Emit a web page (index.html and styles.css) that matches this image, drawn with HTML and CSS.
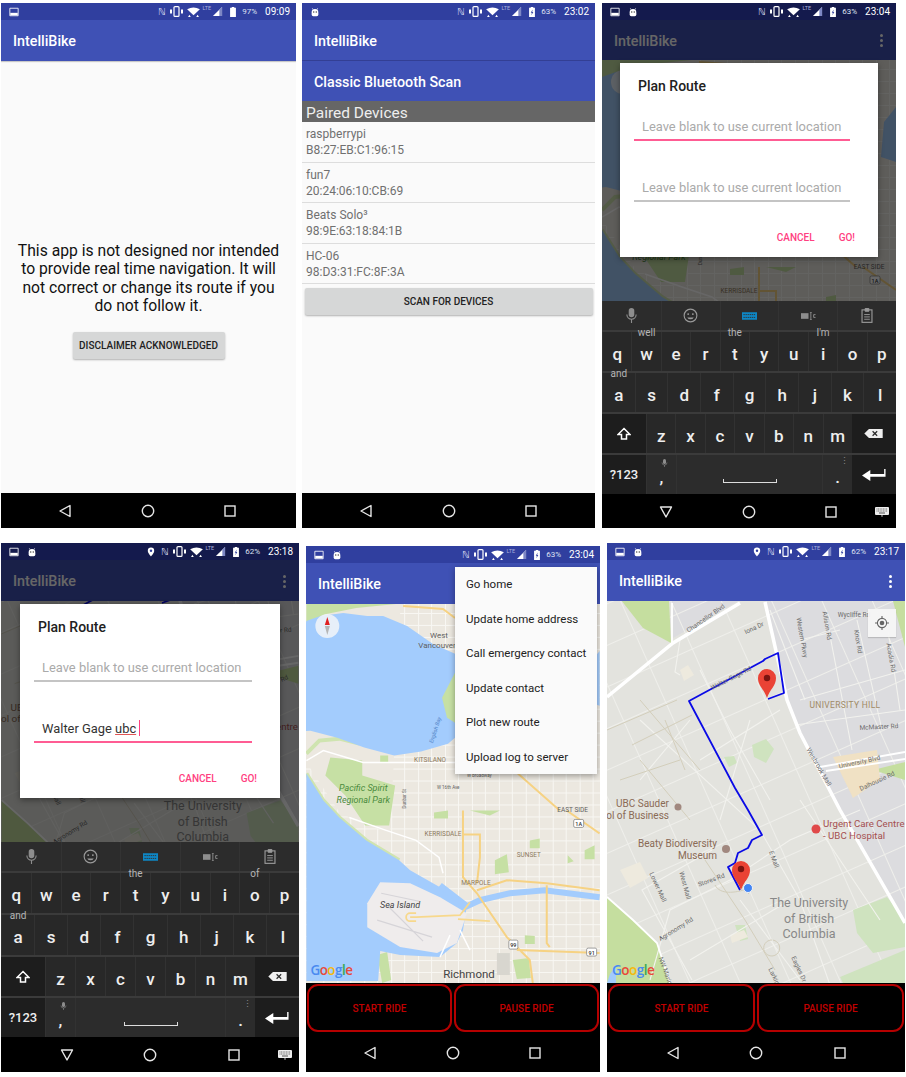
FILE: index.html
```html
<!DOCTYPE html>
<html lang="en">
<head>
  <meta charset="UTF-8" />
  <title>IntelliBike screens</title>
  <link rel="stylesheet" href="styles.css">
</head>
<body>
  <!-- shared icons and the two map drawings -->
  <svg class="defs" width="0" height="0">
    <defs>
      <symbol id="i-image" viewBox="0 0 12 12"><path d="M1 1.500h10v9H1z" fill="none" stroke="#fff" stroke-width="1"/><path d="M1.500 7h9v3h-9z" fill="#fff"/></symbol>
      <symbol id="i-droid" viewBox="0 0 12 12"><path d="M2 6.500a4 4 0 0 1 8 0V9a2 2 0 0 1-2 2H4a2 2 0 0 1-2-2z" fill="#fff"/><path d="M3.500 3 2.800 1.500M8.500 3l.7-1.500" stroke="#fff" stroke-width=".8"/><circle cx="4.500" cy="6" r=".8" fill="#333"/><circle cx="7.500" cy="6" r=".8" fill="#333"/></symbol>
      <symbol id="i-vibe" viewBox="0 0 13 11"><rect x="4" y=".6" width="5" height="9.800" rx="1" fill="none" stroke="#fff" stroke-width="1.200"/><path d="M0 3.500h2v4H0zM11 3.500h2v4h-2z" fill="#fff"/></symbol>
      <symbol id="i-wifi" viewBox="0 0 14 11"><path d="M0 2.500Q7-1.500 14 2.500L7 9z" fill="#fff"/><path d="M1 11l1.500-2.500L4 11zM10 11l1.500-2.500L13 11z" fill="#fff"/></symbol>
      <symbol id="i-signal" viewBox="0 0 12 12"><path d="M11 1v10H1z" fill="#fff"/><path d="M8 4v7h3V1z" fill="#7c86c4"/></symbol>
      <symbol id="i-batt" viewBox="0 0 8 12"><path d="M2.500 0h3v1H7.500v11h-7V1h2z" fill="#fff"/></symbol>
      <symbol id="i-charge" viewBox="0 0 8 12"><path d="M2.500 0h3v1H7.500v11h-7V1h2z" fill="#fff"/><path d="M4.800 3 2.500 7h1.400l-.7 3L5.600 6H4.200z" fill="#303f9f"/></symbol>
      <symbol id="i-place" viewBox="0 0 10 12"><path d="M5 .5a4 4 0 0 1 4 4c0 3-4 7-4 7s-4-4-4-7a4 4 0 0 1 4-4z" fill="#fff"/><circle cx="5" cy="4.500" r="1.500" fill="#303f9f"/></symbol>
      <symbol id="i-back" viewBox="0 0 14 14"><path d="M12 1.500v11L2 7z" fill="none" stroke="#e6e6e6" stroke-width="1.400" stroke-linejoin="round"/></symbol>
      <symbol id="i-down" viewBox="0 0 14 14"><path d="M1.500 2h11L7 12z" fill="none" stroke="#e6e6e6" stroke-width="1.400" stroke-linejoin="round"/></symbol>
      <symbol id="i-home" viewBox="0 0 14 14"><circle cx="7" cy="7" r="5.700" fill="none" stroke="#e6e6e6" stroke-width="1.400"/></symbol>
      <symbol id="i-recent" viewBox="0 0 14 14"><rect x="2" y="2" width="10" height="10" fill="none" stroke="#e6e6e6" stroke-width="1.400"/></symbol>
      <symbol id="i-kbd" viewBox="0 0 14 10"><rect width="14" height="8" rx="1" fill="#eee"/><path d="M1.500 2h11M1.500 4h11" stroke="#555" stroke-width=".9" stroke-dasharray="1 .6"/><path d="M4 6h6" stroke="#555"/><path d="M6 8.500h2l-1 1.500z" fill="#eee"/></symbol>
      <symbol id="i-mic" viewBox="0 0 14 16"><rect x="4" y="0" width="6" height="10" rx="3" fill="#8d8d8d"/><path d="M2 7a5 5 0 0 0 10 0M7 12v4" fill="none" stroke="#8d8d8d" stroke-width="1.200"/></symbol>
      <symbol id="i-smile" viewBox="0 0 16 16"><circle cx="8" cy="8" r="6.800" fill="none" stroke="#9a9a9a" stroke-width="1.200"/><circle cx="5.500" cy="6.500" r="1" fill="#9a9a9a"/><circle cx="10.500" cy="6.500" r="1" fill="#9a9a9a"/><path d="M4.500 10a4 4 0 0 0 7 0z" fill="#9a9a9a"/></symbol>
      <symbol id="i-keys" viewBox="0 0 16 8"><rect width="16" height="8" fill="#0e86c4"/><path d="M1.500 2.500h13M1.500 5.500h13" stroke="#333" stroke-width="1" stroke-dasharray="1.500 .7"/></symbol>
      <symbol id="i-abc" viewBox="0 0 16 8"><rect y="1" width="8" height="6" fill="#8d8d8d"/><path d="M9.500 0h2M9.500 8h2M10.500 0v8" stroke="#8d8d8d" fill="none"/><path d="M15.500 2.500h-2v3h2" stroke="#8d8d8d" fill="none"/></symbol>
      <symbol id="i-clip" viewBox="0 0 12 16"><rect x=".7" y="2" width="10.600" height="13.300" fill="none" stroke="#9a9a9a" stroke-width="1.200"/><path d="M4 .5h4v3H4zM3 7h6M3 9.500h6M3 12h6" stroke="#9a9a9a" fill="#9a9a9a"/></symbol>
      <symbol id="i-shift" viewBox="0 0 14 14"><path d="M7 1.500 13 7.500H9.500v4.500h-5V7.500H1z" fill="none" stroke="#fff" stroke-width="1.500"/></symbol>
      <symbol id="i-del" viewBox="0 0 20 12"><path d="M5 1h15v10H5L0 6z" fill="#eee"/><path d="M9 3.500l5 5M14 3.500l-5 5" stroke="#2a2a2a" stroke-width="1.300"/></symbol>
      <symbol id="i-enter" viewBox="0 0 26 14"><path d="M0 8l9-6v4.500h15V1h1.500v8.500H9V14z" fill="#fff"/></symbol>

      <pattern id="streets" width="27" height="24" patternUnits="userSpaceOnUse">
        <path d="M0 .5h27M13.500 0v24M26.500 0v24M0 12.500h27" stroke="#f8f7f3" stroke-width="1" fill="none"/>
      </pattern>
      <pattern id="campus" width="46" height="38" patternUnits="userSpaceOnUse" patternTransform="rotate(-24)">
        <path d="M0 .5h46M.5 0v38" stroke="#efefeb" stroke-width="1" fill="none"/>
      </pattern>
      <g id="logo">
        <text class="glogo"><tspan fill="#4a8af0">G</tspan><tspan fill="#e8493a">o</tspan><tspan fill="#f5b90f">o</tspan><tspan fill="#4a8af0">g</tspan><tspan fill="#36a853">l</tspan><tspan fill="#e8493a">e</tspan></text>
      </g>

      <g id="map-city">
        <rect x="300" y="540" width="310" height="450" fill="#ece8e0"/>
        <rect x="300" y="540" width="310" height="450" fill="url(#streets)"/>
        <path d="M300 603h100v30l-10 200-50-20-40-60z" fill="#ece8e0"/>
        <path class="green" d="M306 603h90l-40 4-30 6-20 8z"/>
        <path class="green" d="M330 757l32 3v15l33 10-6 40h-24l-20-30-20-20z"/>
        <path class="strip" d="M306 773l17 27 16 17 27 23 33 20M306 753l13-13 20-2 20 5"/>
        <path class="green" d="M380 755h8v7h-8zM430 660l25-6v70l-12-4-8-24zM470 810l20 5 10-5zM495 860l12-6 2 18-14 2z"/>
        <path class="green" d="M377 955l10-3 4 28-9 3zM513 960l16-2 2 20-14 1zM525 935l10 1v8h-10z"/>
        <path class="green" d="M434 812l14-2v8h-14zM530 840l10-2v10h-10zM568 855l6 6-6 2zM585 850l10-5v14h-10z"/>
        <path class="water" d="M306 620l14-5 23-3 24 3 16 0 24 10 26 18 22 10v19l-13 25 5 20 8 5v15l-7 6-27 8-27 4-30-8-27-10-27-7-20 2-13 13z"/>
        <path class="water" d="M600 650l-12 15-3 35 15 5z"/>
        <path class="water" d="M306 773l17 27 16 17 27 23 33 20 11 10 30 17 27 18-4 25-6 13-17 14-40-2-20-4-2 30h-72z"/>
        <path class="river" d="M440 885l27 21 13-6 30-7 35-3 55 7"/>
        <path class="isle" d="M367 903l13-21 30 1 30 14 27 16-10 30-20 10-37-6-33-20z"/>
        <path class="bright" d="M306 760l17-10 40 12h93M349 817l37 13 30 10 23 17 4 16M450 935l-10 22M460 930l10 20"/>
        <path class="runway" d="M381 893l38 8M377 920l55 17M387 905l36 36"/>
        <path class="isle-road" d="M410 917h6l44-2 10-13M416 913h-6a4 4 0 0 0 0 8h6M458 919l32 2"/>
        <path class="hwy" d="M403 605l40 3 12 9M463 810v67l14 16 30 44 23 23 3 23M463 834h17v23l-3 26M477 890l30-10 40 3 53 7M547 885v58l3 4M517 950l83 3M518 773l42 37M567 810l33 23"/>
        <rect class="field" x="497" y="953" width="13" height="12"/>
        <text class="lbl" x="439" y="637" text-anchor="middle" font-size="8">West</text>
        <text class="lbl" x="437" y="647" text-anchor="middle" font-size="8">Vancouver</text>
        <text class="lbl tan" x="430" y="761" text-anchor="middle" font-size="6.500">KITSILANO</text>
        <text class="park" x="363" y="791" text-anchor="middle">Pacific Spirit</text>
        <text class="park" x="363" y="803" text-anchor="middle">Regional Park</text>
        <text class="bay" transform="rotate(-72 437 730)" x="437" y="730" text-anchor="middle">English Bay</text>
        <text class="lbl" transform="rotate(-90 406 808)" x="406" y="808" font-size="4.500">Dunbar St</text>
        <text class="lbl" x="437" y="788" font-size="4.500">W 16th Ave</text>
        <text class="lbl" x="467" y="776" font-size="4.500">W Broadway</text>
        <text class="lbl" x="573" y="812" text-anchor="middle" font-size="6.500">EAST SIDE</text>
        <text class="lbl tan" x="443" y="836" text-anchor="middle" font-size="6.500">KERRISDALE</text>
        <text class="lbl tan" x="529" y="857" text-anchor="middle" font-size="6.500">SUNSET</text>
        <text class="lbl tan" x="476" y="885" text-anchor="middle" font-size="6.500">MARPOLE</text>
        <text class="isle-name" x="400" y="908" text-anchor="middle">Sea Island</text>
        <text class="big" x="469" y="978" text-anchor="middle">Richmond</text>
        <rect class="shield" x="509" y="940" width="9" height="9" rx="1.500"/>
        <text class="sh" x="513.500" y="947" text-anchor="middle">99</text>
        <rect class="shield" x="587" y="948" width="10" height="8" rx="1.500"/>
        <text class="sh" x="592" y="954.500" text-anchor="middle">91</text>
        <rect class="shield" x="574" y="819" width="10" height="8" rx="1.500"/>
        <text class="sh" x="579" y="825.500" text-anchor="middle">1A</text>
        <use href="#logo" x="310" y="975"/>
        <circle cx="327" cy="625" r="12" fill="#eef3f8" fill-opacity=".9"/>
        <path d="M327 616l-2.500 8h5z" fill="#e02020"/>
        <path d="M324.500 625h5l-2.500 9z" fill="#b5b5b5"/>
      </g>

      <g id="map-ubc">
        <rect x="600" y="540" width="310" height="450" fill="#e3e3de"/>
        <path d="M671 600h69l-67 38zM765 600h145v330L840 810l-40-77-13-33z" fill="#dcdcdf"/>
        <rect x="600" y="600" width="310" height="390" fill="url(#campus)"/>
        <path class="ugreen" d="M621 600h48l2 43-28-15z"/>
        <path class="ugreen" d="M893 601h12v46z"/>
        <path class="ugreen" d="M607 897l26 23 24 23 13 40h-63z"/>
        <path class="ugreen" d="M873 770l32-8v18z"/>
        <path class="lgreen" d="M853 910l34-13 18 23v27l-32 6-16-20zM840 977l65-27v33h-62zM735 925l10 0 3 14-8 2zM752 745l14-6 8 10-8 14-12-6zM724 757l10-1 3 7-8 4z"/>
        <path d="M833 757l44-7 3 30-27 18z" fill="#f0e1c4"/>
        <path d="M610 974l6-8v17h-9z" fill="#a2cbfc"/>
        <path d="M680 670l8-5 6 10-10 6zM730 935l14-5 4 7-16 6zM620 870l20-8 8 16-18 10z" fill="#eeeade"/>
        <path class="minor" d="M680 640l-5 32 5 3M700 670l30 60 40 70M640 720l120 110 40 70 30 85M690 720l-50 60M700 760l80-50M750 720l-30 100M770 610l35 90M800 640l40-10M827 620l25 130M857 620l25 110M885 610l15 100M800 700l105-30M795 725l110-15M650 980l20-70 60-30 60-40 70-30M740 900l60 80M800 800l80 120M690 960l100-60M712 850l-70 40 50 90"/>
        <path class="path-tan" d="M607 730l70-30M640 700l60 70M665 720l20 50M632 745l60-30M640 760l50 60M620 780l60-20M705 860l40 60 30 50M735 880l14 14M772 940a8 8 0 1 0 1 .1M715 885c5 10 20 8 32 4"/>
        <path class="wide" d="M607 697l66-54 67-40"/>
        <path class="wide" d="M765 602l22 98 13 33 40 77 65 113"/>
        <path class="mid" d="M820 767l85-15M826 771l79-12M672 603v40M607 897l26 23 24 23 13 40"/>
        <path class="route" d="M768 699l16-6-6-40-13 6-2 2-74 40 46 87 13 22 14 25-10 5-4 8-10 5-3 10-7 4 12 23"/>
        <g class="road-lbl">
          <text transform="rotate(-35 707 620)" x="707" y="620" text-anchor="middle">Chancellor Blvd</text>
          <text transform="rotate(-25 755 630)" x="755" y="630" text-anchor="middle">Iona Dr</text>
          <text transform="rotate(-27 732 680)" x="732" y="680" text-anchor="middle">Walter Gage Rd</text>
          <text transform="rotate(80 800 638)" x="800" y="638" text-anchor="middle">Western Pkwy</text>
          <text transform="rotate(80 825 626)" x="825" y="626" text-anchor="middle">Allison Rd</text>
          <text x="854" y="617" text-anchor="middle">Wycliffe Rd</text>
          <text transform="rotate(80 856 642)" x="856" y="642" text-anchor="middle">Knox Rd</text>
          <text transform="rotate(80 889 658)" x="889" y="658" text-anchor="middle">Acadia Rd</text>
          <text transform="rotate(-3 879 729)" x="879" y="729" text-anchor="middle">McMaster Rd</text>
          <text transform="rotate(60 817 768)" x="817" y="768" text-anchor="middle">Wesbrook Mall</text>
          <text transform="rotate(-12 860 764)" x="860" y="764" text-anchor="middle">University Blvd</text>
          <text transform="rotate(-25 878 783)" x="878" y="783" text-anchor="middle">Dalhousie Rd</text>
          <text transform="rotate(70 772 860)" x="772" y="860" text-anchor="middle">E Mall</text>
          <text transform="rotate(-20 712 882)" x="712" y="882" text-anchor="middle">Stores Rd</text>
          <text transform="rotate(65 656 888)" x="656" y="888" text-anchor="middle">Lower Mall</text>
          <text transform="rotate(75 683 886)" x="683" y="886" text-anchor="middle">West Mall</text>
          <text transform="rotate(-32 677 931)" x="677" y="931" text-anchor="middle">Agronomy Rd</text>
          <text transform="rotate(70 664 973)" x="664" y="973" text-anchor="middle">NW Marine</text>
          <text transform="rotate(65 772 977)" x="772" y="977" text-anchor="middle">Larkin</text>
          <text transform="rotate(65 797 970)" x="797" y="970" text-anchor="middle">Eagles Dr</text>
        </g>
        <text class="hood" x="845" y="708" text-anchor="middle">UNIVERSITY HILL</text>
        <text class="poi" x="616" y="807">UBC Sauder</text>
        <circle cx="678" cy="807" r="3.500" fill="#a1887f"/>
        <text class="poi" x="669" y="819" text-anchor="end">School of Business</text>
        <text class="poi" x="717" y="847" text-anchor="end">Beaty Biodiversity</text>
        <text class="poi" x="717" y="859" text-anchor="end">Museum</text>
        <circle cx="726" cy="849" r="4" fill="#a1887f"/>
        <circle cx="816" cy="829" r="4.500" fill="#e04a4a"/>
        <text class="hosp" x="823" y="827">Urgent Care Centre</text>
        <text class="hosp" x="823" y="839">- UBC Hospital</text>
        <text class="campus-name" x="809" y="907" text-anchor="middle">The University</text>
        <text class="campus-name" x="809" y="923" text-anchor="middle">of British</text>
        <text class="campus-name" x="809" y="938" text-anchor="middle">Columbia</text>
        <path class="pin" d="M767 698c-3-9-9-12-9-20a9 9 0 0 1 18 0c0 8-6 11-9 20z"/>
        <circle cx="767" cy="678" r="3.200" fill="#7a1410"/>
        <circle cx="748" cy="888" r="4.500" fill="#4285f4" stroke="#f4f4f4"/>
        <path class="pin" d="M741 890c-3-9-9-12-9-20a9 9 0 0 1 18 0c0 8-6 11-9 20z"/>
        <circle cx="741" cy="869" r="3.200" fill="#7a1410"/>
        <use href="#logo" x="612" y="975"/>
      </g>
    </defs>
  </svg>

  <div class="board">
    <div class="row">
      <!-- disclaimer -->
      <section class="screen s1">
        <div class="status">
          <svg class="ic"><use href="#i-image"/></svg>
          <span class="nfc first">ℕ</span>
          <svg class="ic vibe"><use href="#i-vibe"/></svg>
          <svg class="ic wifi"><use href="#i-wifi"/></svg>
          <span class="lte">LTE</span>
          <svg class="ic sig"><use href="#i-signal"/></svg>
          <svg class="ic batt"><use href="#i-batt"/></svg>
          <span class="pct">97%</span>
          <span class="time">09:09</span>
        </div>
        <header class="appbar"><span class="app-title">IntelliBike</span></header>
        <main class="notice">
          <p class="notice-text">This app is not designed nor intended to provide real time navigation. It will not correct or change its route if you do not follow it.</p>
          <button class="flat-btn ack">DISCLAIMER ACKNOWLEDGED</button>
        </main>
        <nav class="navbar">
          <span class="nav-cell"><svg class="nav-ic"><use href="#i-back"/></svg></span>
          <span class="nav-cell"><svg class="nav-ic"><use href="#i-home"/></svg></span>
          <span class="nav-cell"><svg class="nav-ic"><use href="#i-recent"/></svg></span>
        </nav>
      </section>

      <!-- bluetooth -->
      <section class="screen s2">
        <div class="status">
          <svg class="ic"><use href="#i-droid"/></svg>
          <span class="nfc first">ℕ</span>
          <svg class="ic vibe"><use href="#i-vibe"/></svg>
          <svg class="ic wifi"><use href="#i-wifi"/></svg>
          <span class="lte">LTE</span>
          <svg class="ic sig"><use href="#i-signal"/></svg>
          <svg class="ic batt"><use href="#i-charge"/></svg>
          <span class="pct">63%</span>
          <span class="time">23:02</span>
        </div>
        <header class="appbar split"><span class="app-title">IntelliBike</span></header>
        <div class="appbar sub"><span class="app-title">Classic Bluetooth Scan</span></div>
        <div class="paired">Paired Devices</div>
        <main class="devices">
          <div class="device">raspberrypi<br>B8:27:EB:C1:96:15</div>
          <div class="device">fun7<br>20:24:06:10:CB:69</div>
          <div class="device">Beats Solo³<br>98:9E:63:18:84:1B</div>
          <div class="device">HC-06<br>98:D3:31:FC:8F:3A</div>
          <button class="flat-btn scan">SCAN FOR DEVICES</button>
        </main>
        <nav class="navbar">
          <span class="nav-cell"><svg class="nav-ic"><use href="#i-back"/></svg></span>
          <span class="nav-cell"><svg class="nav-ic"><use href="#i-home"/></svg></span>
          <span class="nav-cell"><svg class="nav-ic"><use href="#i-recent"/></svg></span>
        </nav>
      </section>

      <!-- plan route, start field focused -->
      <section class="screen s3">
        <div class="status dim">
          <svg class="ic"><use href="#i-image"/></svg>
          <svg class="ic lead"><use href="#i-droid"/></svg>
          <span class="nfc first">ℕ</span>
          <svg class="ic vibe"><use href="#i-vibe"/></svg>
          <svg class="ic wifi"><use href="#i-wifi"/></svg>
          <span class="lte">LTE</span>
          <svg class="ic sig"><use href="#i-signal"/></svg>
          <svg class="ic batt"><use href="#i-charge"/></svg>
          <span class="pct">63%</span>
          <span class="time">23:04</span>
        </div>
        <div class="backdrop">
          <header class="appbar"><span class="app-title">IntelliBike</span><span class="dots"><i></i><i></i><i></i></span></header>
          <svg class="map" viewBox="306 603 294 241"><use href="#map-city"/></svg>
          <div class="scrim"></div>
          <div class="dialog">
            <h2 class="dialog-title">Plan Route</h2>
            <div class="field focus"><span class="hint-text">Leave blank to use current location</span></div>
            <div class="field"><span class="hint-text">Leave blank to use current location</span></div>
            <div class="dialog-actions"><span>CANCEL</span><span>GO!</span></div>
          </div>
        </div>
        <div class="keyboard">
          <div class="kb-tools">
            <span><svg class="t-mic"><use href="#i-mic"/></svg></span>
            <span><svg class="t-smile"><use href="#i-smile"/></svg></span>
            <span><svg class="t-keys"><use href="#i-keys"/></svg></span>
            <span><svg class="t-keys"><use href="#i-abc"/></svg></span>
            <span><svg class="t-clip"><use href="#i-clip"/></svg></span>
          </div>
          <div class="kb-row">
            <span class="key">q</span><span class="key">w<em>well</em></span><span class="key">e</span><span class="key">r</span><span class="key">t<em>the</em></span><span class="key">y</span><span class="key">u</span><span class="key">i<em>I'm</em></span><span class="key">o</span><span class="key">p</span>
          </div>
          <div class="kb-row">
            <span class="key">a<em>and</em></span><span class="key">s</span><span class="key">d</span><span class="key">f</span><span class="key">g</span><span class="key">h</span><span class="key">j</span><span class="key">k</span><span class="key">l</span>
          </div>
          <div class="kb-row">
            <span class="key fn"><svg class="k-shift"><use href="#i-shift"/></svg></span>
            <span class="key">z</span><span class="key">x</span><span class="key">c</span><span class="key">v</span><span class="key">b</span><span class="key">n</span><span class="key">m</span>
            <span class="key fn"><svg class="k-del"><use href="#i-del"/></svg></span>
          </div>
          <div class="kb-row">
            <span class="key fn sym">?123</span>
            <span class="key side">,<svg class="k-mini"><use href="#i-mic"/></svg></span>
            <span class="key space"><i class="space-bar"></i></span>
            <span class="key side">.<b class="more">⋮</b></span>
            <span class="key fn"><svg class="k-enter"><use href="#i-enter"/></svg></span>
          </div>
        </div>
        <nav class="navbar">
          <span class="nav-cell"><svg class="nav-ic"><use href="#i-down"/></svg></span>
          <span class="nav-cell"><svg class="nav-ic"><use href="#i-home"/></svg></span>
          <span class="nav-cell"><svg class="nav-ic"><use href="#i-recent"/></svg></span>
          <svg class="nav-kbd"><use href="#i-kbd"/></svg>
        </nav>
      </section>
    </div>

    <div class="row">
      <!-- plan route, destination typed -->
      <section class="screen s4">
        <div class="status dim">
          <svg class="ic"><use href="#i-image"/></svg>
          <svg class="ic lead"><use href="#i-droid"/></svg>
          <svg class="ic place first"><use href="#i-place"/></svg>
          <span class="nfc after-place">ℕ</span>
          <svg class="ic vibe"><use href="#i-vibe"/></svg>
          <svg class="ic wifi"><use href="#i-wifi"/></svg>
          <span class="lte">LTE</span>
          <svg class="ic sig"><use href="#i-signal"/></svg>
          <svg class="ic batt"><use href="#i-charge"/></svg>
          <span class="pct">62%</span>
          <span class="time">23:18</span>
        </div>
        <div class="backdrop">
          <header class="appbar"><span class="app-title">IntelliBike</span><span class="dots"><i></i><i></i><i></i></span></header>
          <svg class="map" viewBox="607 697 298 242"><use href="#map-ubc"/></svg>
          <div class="scrim"></div>
          <div class="dialog">
            <h2 class="dialog-title">Plan Route</h2>
            <div class="field"><span class="hint-text">Leave blank to use current location</span></div>
            <div class="field focus"><span class="typed">Walter Gage <u>ubc</u></span><i class="caret"></i></div>
            <div class="dialog-actions"><span>CANCEL</span><span>GO!</span></div>
          </div>
        </div>
        <div class="keyboard">
          <div class="kb-tools">
            <span><svg class="t-mic"><use href="#i-mic"/></svg></span>
            <span><svg class="t-smile"><use href="#i-smile"/></svg></span>
            <span><svg class="t-keys"><use href="#i-keys"/></svg></span>
            <span><svg class="t-keys"><use href="#i-abc"/></svg></span>
            <span><svg class="t-clip"><use href="#i-clip"/></svg></span>
          </div>
          <div class="kb-row tall">
            <span class="key">q</span><span class="key">w</span><span class="key">e</span><span class="key">r</span><span class="key">t<em>the</em></span><span class="key">y</span><span class="key">u</span><span class="key">i</span><span class="key">o<em>of</em></span><span class="key">p</span>
          </div>
          <div class="kb-row tall">
            <span class="key">a<em>and</em></span><span class="key">s</span><span class="key">d</span><span class="key">f</span><span class="key">g</span><span class="key">h</span><span class="key">j</span><span class="key">k</span><span class="key">l</span>
          </div>
          <div class="kb-row">
            <span class="key fn"><svg class="k-shift"><use href="#i-shift"/></svg></span>
            <span class="key">z</span><span class="key">x</span><span class="key">c</span><span class="key">v</span><span class="key">b</span><span class="key">n</span><span class="key">m</span>
            <span class="key fn"><svg class="k-del"><use href="#i-del"/></svg></span>
          </div>
          <div class="kb-row">
            <span class="key fn sym">?123</span>
            <span class="key side">,<svg class="k-mini"><use href="#i-mic"/></svg></span>
            <span class="key space"><i class="space-bar"></i></span>
            <span class="key side">.<b class="more">⋮</b></span>
            <span class="key fn"><svg class="k-enter"><use href="#i-enter"/></svg></span>
          </div>
        </div>
        <nav class="navbar">
          <span class="nav-cell"><svg class="nav-ic"><use href="#i-down"/></svg></span>
          <span class="nav-cell"><svg class="nav-ic"><use href="#i-home"/></svg></span>
          <span class="nav-cell"><svg class="nav-ic"><use href="#i-recent"/></svg></span>
          <svg class="nav-kbd"><use href="#i-kbd"/></svg>
        </nav>
      </section>

      <!-- overflow menu over the city map -->
      <section class="screen s5">
        <div class="status">
          <svg class="ic"><use href="#i-image"/></svg>
          <svg class="ic lead"><use href="#i-droid"/></svg>
          <span class="nfc first">ℕ</span>
          <svg class="ic vibe"><use href="#i-vibe"/></svg>
          <svg class="ic wifi"><use href="#i-wifi"/></svg>
          <span class="lte">LTE</span>
          <svg class="ic sig"><use href="#i-signal"/></svg>
          <svg class="ic batt"><use href="#i-charge"/></svg>
          <span class="pct">63%</span>
          <span class="time">23:04</span>
        </div>
        <header class="appbar"><span class="app-title">IntelliBike</span></header>
        <svg class="map" viewBox="306 603 294 380"><use href="#map-city"/></svg>
        <div class="ride-bar"><button class="ride-btn">START RIDE</button><button class="ride-btn">PAUSE RIDE</button></div>
        <nav class="navbar low">
          <span class="nav-cell"><svg class="nav-ic"><use href="#i-back"/></svg></span>
          <span class="nav-cell"><svg class="nav-ic"><use href="#i-home"/></svg></span>
          <span class="nav-cell"><svg class="nav-ic"><use href="#i-recent"/></svg></span>
        </nav>
        <ul class="menu">
          <li>Go home</li>
          <li>Update home address</li>
          <li>Call emergency contact</li>
          <li>Update contact</li>
          <li>Plot new route</li>
          <li>Upload log to server</li>
        </ul>
      </section>

      <!-- route on the campus map -->
      <section class="screen s6">
        <div class="status">
          <svg class="ic"><use href="#i-image"/></svg>
          <svg class="ic lead"><use href="#i-droid"/></svg>
          <svg class="ic place first"><use href="#i-place"/></svg>
          <span class="nfc after-place">ℕ</span>
          <svg class="ic vibe"><use href="#i-vibe"/></svg>
          <svg class="ic wifi"><use href="#i-wifi"/></svg>
          <span class="lte">LTE</span>
          <svg class="ic sig"><use href="#i-signal"/></svg>
          <svg class="ic batt"><use href="#i-charge"/></svg>
          <span class="pct">62%</span>
          <span class="time">23:17</span>
        </div>
        <header class="appbar"><span class="app-title">IntelliBike</span><span class="dots"><i></i><i></i><i></i></span></header>
        <svg class="map" viewBox="607 601 298 382"><use href="#map-ubc"/></svg>
        <div class="ride-bar"><button class="ride-btn">START RIDE</button><button class="ride-btn">PAUSE RIDE</button></div>
        <nav class="navbar low">
          <span class="nav-cell"><svg class="nav-ic"><use href="#i-back"/></svg></span>
          <span class="nav-cell"><svg class="nav-ic"><use href="#i-home"/></svg></span>
          <span class="nav-cell"><svg class="nav-ic"><use href="#i-recent"/></svg></span>
        </nav>
        <div class="locate">
          <svg viewBox="0 0 14 14" width="14" height="14"><circle cx="7" cy="7" r="4.600" fill="none" stroke="#666" stroke-width="1.100"/><circle cx="7" cy="7" r="2.300" fill="#666"/><path d="M7 0v2.400M7 11.600V14M0 7h2.400M11.600 7H14" stroke="#666" stroke-width="1.100"/></svg>
        </div>
      </section>
    </div>
  </div>
</body>
</html>
```

FILE: styles.css
```css
body {
  margin: 0;
  background: #fff;
  font-family: Roboto, 'Liberation Sans', sans-serif;
  color: #222;
}

.defs {
  position: absolute;
}

.board {
  display: flex;
  flex-direction: column;
  gap: 15px;
  padding-top: 3px;
}

.row {
  display: flex;
  align-items: flex-start;
}

.screen {
  position: relative;
  display: flex;
  flex-direction: column;
  overflow: hidden;
  background: #fafafa;
}

.s1 { width: 295px; height: 525px; margin-left: 1px; }
.s2 { width: 293px; height: 525px; margin-left: 6px; }
.s3 { width: 294px; height: 525px; margin-left: 7px; }
.s4 { width: 298px; height: 529px; margin-left: 1px; }
.s5 { width: 294px; height: 526px; margin-left: 7px; margin-top: 3px; }
.s6 { width: 298px; height: 529px; margin-left: 7px; }

/* status bar */
.status {
  display: flex;
  align-items: center;
  flex: none;
  height: 17px;
  padding: 0 6px 0 8px;
  background: #303f9f;
  color: #fff;
}

.status.dim {
  background: #141a4d;
}

.ic {
  width: 10px;
  height: 10px;
  flex: none;
}

.lead {
  margin-left: 8px;
}

.vibe {
  width: 13px;
  height: 11px;
  margin-left: 4px;
}

.wifi {
  width: 13px;
  height: 10px;
  margin-left: 4px;
}

.sig {
  width: 11px;
  height: 11px;
  margin-left: 1px;
}

.batt {
  width: 8px;
  height: 10px;
  margin-left: 6px;
}

.place {
  width: 8px;
}

.first {
  margin-left: auto;
}

.after-place {
  margin-left: 6px;
}

.nfc {
  font: 9.500px 'DejaVu Sans', sans-serif;
  color: #d8dcf0;
}

.lte {
  align-self: flex-start;
  margin: 2px 0 0 3px;
  font-size: 5.500px;
  color: #aab0dc;
}

.pct {
  margin-left: 5px;
  font-size: 8px;
  color: #dfe2f2;
}

.time {
  margin-left: 8px;
  font-size: 10px;
}

/* app bar */
.appbar {
  display: flex;
  align-items: center;
  justify-content: space-between;
  flex: none;
  height: 41px;
  padding: 1px 12px 0;
  box-sizing: border-box;
  background: #3f51b5;
  color: #fff;
  box-shadow: 0 1px 1px rgba(0, 0, 0, .2);
}

.app-title {
  font-size: 14.300px;
  font-weight: 500;
}

.appbar.split {
  border-bottom: 1px solid #333f94;
}

.appbar.sub {
  height: 40px;
  box-shadow: none;
}

.dots {
  display: flex;
  flex-direction: column;
  gap: 2px;
  margin-right: 1px;
}

.dots i {
  width: 3px;
  height: 3px;
  border-radius: 50%;
  background: #fff;
}

/* disclaimer */
.notice {
  flex: 1;
  display: flex;
  flex-direction: column;
  align-items: center;
  padding: 181px 14px 0;
}

.notice-text {
  margin: 0;
  font-size: 15.700px;
  line-height: 18.300px;
  text-align: center;
  color: #111;
}

.flat-btn {
  border: 0;
  border-radius: 2px;
  background: #d6d7d7;
  box-shadow: 0 1px 2px rgba(0, 0, 0, .3);
  font-family: Roboto, sans-serif;
  font-size: 10px;
  font-weight: 500;
  color: #222;
}

.ack {
  width: 152px;
  height: 27px;
  margin-top: 17px;
  padding: 0;
}

/* bluetooth list */
.paired {
  flex: none;
  height: 21px;
  padding-left: 4px;
  background: #666;
  color: #eee;
  font-size: 15.500px;
  line-height: 24px;
}

.devices {
  flex: 1;
  display: flex;
  flex-direction: column;
}

.device {
  height: 40.500px;
  box-sizing: border-box;
  padding: 4px 4px 0;
  border-bottom: 1px solid #ddd;
  font-size: 12px;
  line-height: 16px;
  color: #707070;
}

.scan {
  align-self: center;
  width: 288px;
  height: 27px;
  margin-top: 4px;
}

/* nav bar */
.navbar {
  display: flex;
  align-items: center;
  flex: none;
  height: 35px;
  padding-left: 23px;
  background: #000;
}

.navbar.low {
  height: 39px;
}

.nav-cell {
  display: flex;
  justify-content: center;
  width: 82.500px;
}

.s4 .navbar, .s6 .navbar {
  padding-left: 24px;
}

.s4 .nav-cell, .s6 .nav-cell {
  width: 83.500px;
}

.nav-ic {
  width: 14px;
  height: 14px;
}

.nav-kbd {
  width: 14px;
  height: 10px;
  margin-left: auto;
  margin-right: 7px;
}

/* map */
.map {
  display: block;
  flex: 1;
  min-height: 0;
  width: 100%;
}

.s3 .map, .s4 .map {
  height: 241px;
  flex: none;
}

.water { fill: #a3ccfd; }
.green { fill: #c6e0a4; }
.strip { fill: none; stroke: #cfe4b0; stroke-width: 4; }
.isle { fill: #efecec; }
.field { fill: #d8d6cf; }
.river { fill: none; stroke: #a3ccfd; stroke-width: 6; }
.bright { fill: none; stroke: #fff; stroke-width: 1.500; }
.runway { fill: none; stroke: #d6d4d8; stroke-width: 1.200; }
.isle-road { fill: none; stroke: #f7d88c; stroke-width: 1.800; }
.hwy { fill: none; stroke: #f6d283; stroke-width: 2; }
.shield { fill: #fff; stroke: #777; stroke-width: .7; }

.lbl { font-family: Roboto, sans-serif; fill: #5f5f5f; }
.tan { fill: #8d7a5e; }
.park { font: italic 9px Roboto, sans-serif; fill: #4a8a3c; }
.bay { font: italic 5.500px Roboto, sans-serif; fill: #4d7fc4; }
.isle-name { font: italic 9px Roboto, sans-serif; fill: #444; }
.big { font: 11.500px Roboto, sans-serif; fill: #444; }
.sh { font: 500 5.500px Roboto, sans-serif; fill: #333; }
.glogo { font: 600 13.500px 'Open Sans', sans-serif; letter-spacing: -.5px; }

.ugreen { fill: #c5de9f; }
.lgreen { fill: #cfe3bf; }
.minor { fill: none; stroke: #f2f2ee; stroke-width: 1.100; }
.path-tan { fill: none; stroke: #d3cebb; stroke-width: 1; }
.wide { fill: none; stroke: #fff; stroke-width: 3.500; }
.mid { fill: none; stroke: #fff; stroke-width: 1.800; }
.route { fill: none; stroke: #0a0ae6; stroke-width: 1.800; stroke-linejoin: round; }
.pin { fill: #ea4335; }
.road-lbl { font: 6.500px Roboto, sans-serif; fill: #6a6a6a; }
.hood { font: 8.500px Roboto, sans-serif; letter-spacing: .3px; fill: #a08a66; }
.poi { font: 10px Roboto, sans-serif; fill: #8a6a55; }
.hosp { font: 9.700px Roboto, sans-serif; fill: #a54f4f; }
.campus-name { font: 12.500px Roboto, sans-serif; fill: #888; }

/* dimmed area behind a dialog */
.backdrop {
  position: relative;
  flex: none;
  display: flex;
  flex-direction: column;
}

.s3 .appbar { height: 40px; }

.scrim {
  position: absolute;
  inset: 0;
  background: rgba(0, 0, 0, .6);
}

.dialog {
  position: absolute;
  left: 18px;
  top: 43px;
  width: 258px;
  height: 194px;
  padding: 14px 28px 0 14px;
  box-sizing: border-box;
  background: #fff;
  box-shadow: 0 2px 6px rgba(0, 0, 0, .4);
}

.s4 .dialog {
  left: 19px;
  top: 44px;
  width: 260px;
}

.dialog-title {
  margin: 0 0 20px 4px;
  font-size: 14px;
  line-height: 18px;
  font-weight: 500;
  color: #212121;
}

.field {
  display: flex;
  align-items: center;
  height: 22px;
  margin-bottom: 35px;
  padding: 0 0 2px 8px;
  border-bottom: 2px solid #c4c4c4;
  font-size: 12.900px;
}

.field.focus {
  border-bottom-color: #ff5c93;
}

.hint-text {
  color: #aaa;
}

.typed {
  color: #333;
}

.typed u {
  text-decoration-color: #e05555;
}

.caret {
  width: 1px;
  height: 16px;
  margin-left: 3px;
  background: #ff4081;
}

.dialog-actions {
  display: flex;
  justify-content: flex-end;
  gap: 24px;
  margin: -5px -5px 0 0;
  font-size: 10px;
  font-weight: 500;
  color: #ff4081;
}

/* keyboard */
.keyboard {
  flex: none;
  display: flex;
  flex-direction: column;
  background: #282828;
  color: #eee;
}

.kb-tools {
  display: flex;
  height: 29px;
  background: #2c2c2c;
}

.kb-tools span {
  flex: 1;
  display: flex;
  align-items: center;
  justify-content: center;
  border-left: 1px solid #333;
}

.t-mic { width: 13px; height: 15px; }
.t-smile { width: 15px; height: 15px; }
.t-keys { width: 15px; height: 8px; }
.t-clip { width: 12px; height: 15px; }

.kb-row {
  display: flex;
  height: 39px;
  border-top: 2px solid #3b3b3b;
}

.kb-row.tall {
  height: 40px;
}

.key {
  position: relative;
  flex: 1;
  display: flex;
  align-items: center;
  justify-content: center;
  padding-top: 4px;
  box-sizing: border-box;
  font-size: 17px;
  font-weight: 500;
  border-left: 1px solid #323232;
}

.key em {
  position: absolute;
  left: 0;
  right: 0;
  top: -5px;
  font-size: 10px;
  font-style: normal;
  font-weight: 400;
  line-height: 12px;
  text-align: center;
  color: #b5b5b5;
}

.key.fn {
  flex: none;
  width: 44px;
  padding-top: 0;
  background: #1d1d1d;
  border-left: 0;
}

.key.sym {
  font-size: 13px;
  font-weight: 500;
  padding-top: 0;
}

.key.side {
  flex: none;
  width: 30px;
  background: #2c2c2c;
}

.key.space {
  background: #2c2c2c;
}

.space-bar {
  width: 52px;
  height: 3px;
  margin-top: 8px;
  border: 1px solid #ddd;
  border-top: 0;
}

.k-shift { width: 14px; height: 14px; }
.k-del { width: 19px; height: 11px; }
.k-enter { width: 24px; height: 13px; }

.k-mini {
  position: absolute;
  top: 3px;
  left: 14px;
  width: 7px;
  height: 10px;
}

.more {
  position: absolute;
  top: 1px;
  right: 3px;
  font-size: 9px;
  font-weight: 400;
  color: #888;
}

/* ride buttons */
.ride-bar {
  display: flex;
  flex: none;
  height: 50px;
  background: #000;
}

.ride-btn {
  flex: 1;
  margin: 1px;
  border: 2px solid #b50000;
  border-radius: 11px;
  background: #000;
  color: #c00000;
  font-family: Roboto, sans-serif;
  font-size: 10px;
  font-weight: 500;
}

/* overflow menu */
.menu {
  position: absolute;
  top: 21px;
  left: 149px;
  width: 142px;
  margin: 0;
  padding: 0;
  list-style: none;
  background: #fafafa;
  box-shadow: 0 2px 6px rgba(0, 0, 0, .35);
}

.menu li {
  height: 34.500px;
  padding-left: 11px;
  font-size: 11.500px;
  line-height: 34.500px;
  color: #222;
}

.locate {
  position: absolute;
  top: 66px;
  right: 9px;
  display: flex;
  align-items: center;
  justify-content: center;
  width: 28px;
  height: 28px;
  background: rgba(246, 246, 246, .95);
  box-shadow: 0 1px 1px rgba(0, 0, 0, .15);
}
```
